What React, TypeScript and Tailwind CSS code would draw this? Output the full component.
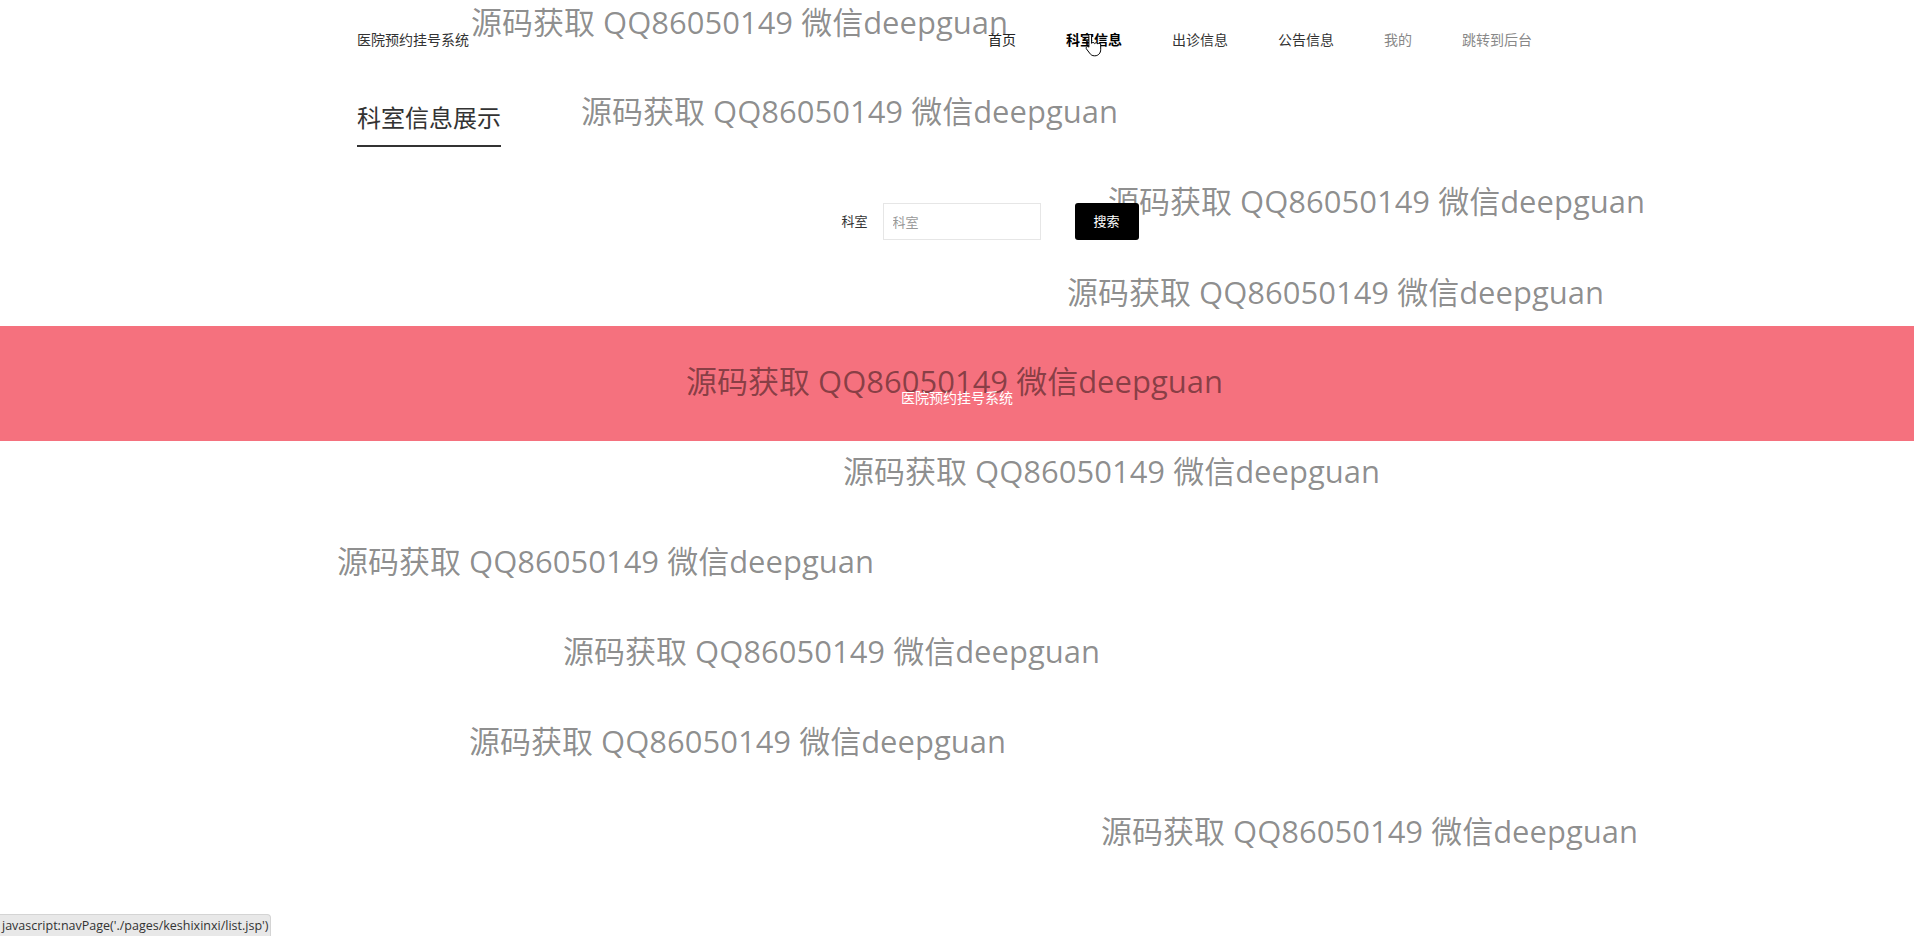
import React from "react";

const marks = [
  { left: 471, top: 22 },
  { left: 581, top: 111 },
  { left: 1108, top: 201 },
  { left: 1067, top: 292 },
  { left: 686, top: 381 },
  { left: 843, top: 471 },
  { left: 337, top: 561 },
  { left: 563, top: 651 },
  { left: 469, top: 741 },
  { left: 1101, top: 831 },
];

const navItems = [
  { label: "首页", cls: "text-[#222]" },
  { label: "科室信息", cls: "text-black font-bold" },
  { label: "出诊信息", cls: "text-[#333]" },
  { label: "公告信息", cls: "text-[#333]" },
  { label: "我的", cls: "text-[#888]" },
  { label: "跳转到后台", cls: "text-[#888]" },
];

const font = "font-['Open_Sans','Noto_Sans_CJK_SC',sans-serif]";

const HandCursor = () => (
  <svg width="18" height="24" viewBox="0 0 18 24" className="absolute left-[1085px] top-[33px]">
    <path
      d="M5 1.5c.9 0 1.6.7 1.6 1.6v7.2c.3-.5.9-.8 1.5-.8.8 0 1.4.5 1.6 1.1.3-.5.9-.8 1.5-.8.8 0 1.4.5 1.6 1.2.3-.4.8-.6 1.3-.6.9 0 1.6.7 1.6 1.6v4.7c0 3.3-2.4 6.1-5.7 6.1H9.3c-1.9 0-3.6-1-4.6-2.6L1.4 15.9c-.5-.8-.2-1.8.6-2.2.7-.4 1.5-.2 2 .4l-.1.1V3.1C3.4 2.2 4.1 1.5 5 1.5z"
      fill="#fff"
      stroke="#000"
      strokeWidth="1"
      strokeLinejoin="round"
    />
  </svg>
);

const App = () => {
  return (
    <div className={`relative min-h-[936px] w-full overflow-hidden bg-white ${font}`}>
      {/* watermark layer, sits under positioned content */}
      <div className="absolute inset-0">
        {marks.map((m, i) => (
          <div
            key={i}
            className="absolute whitespace-nowrap text-[31px] leading-[40px] text-black/45"
            style={{ left: m.left, top: m.top - 20 }}
          >
            源码获取 QQ86050149 微信deepguan
          </div>
        ))}
      </div>

      <div className="mx-auto w-[1200px]">
        <header className="flex h-[78px] items-center justify-between">
          <div className="relative text-[14px] text-[#333]">医院预约挂号系统</div>
          <nav className="relative flex">
            {navItems.map((n) => (
              <a key={n.label} className={`cursor-pointer px-[25px] text-[14px] ${n.cls}`}>
                {n.label}
              </a>
            ))}
          </nav>
        </header>

        <div className="pt-[24px]">
          <div className="relative inline-block border-b-2 border-[#333] pb-[11px] text-[24px] leading-[32px] text-[#333]">
            科室信息展示
          </div>
        </div>

        <form className="flex items-center justify-center pl-[66px] pt-[56px]">
          <label className="relative mr-[15px] text-[13px] text-[#333]">科室</label>
          <input
            placeholder="科室"
            className="relative h-[37px] w-[158px] border border-[#e6e6e6] bg-white px-[9px] text-[13px] text-[#333] outline-none placeholder:text-[#999]"
          />
          <button
            type="button"
            className="relative ml-[34px] h-[37px] w-[64px] rounded-[3px] bg-black text-[13px] text-white"
          >
            搜索
          </button>
        </form>
      </div>

      <footer className="mt-[86px] h-[115px] bg-[#f5717e] pt-[62px]">
        <div className="relative text-center text-[14px] leading-[20px] text-white">医院预约挂号系统</div>
      </footer>

      <HandCursor />

      <div className="fixed bottom-0 left-0 z-10 rounded-tr-[4px] border-r border-t border-[#d4d4d4] bg-[#e8e8e8] px-[2px] text-[12.5px] leading-[21px] text-[#333] font-['Open_Sans',sans-serif]">
        javascript:navPage('./pages/keshixinxi/list.jsp')
      </div>
    </div>
  );
};

export default App;
